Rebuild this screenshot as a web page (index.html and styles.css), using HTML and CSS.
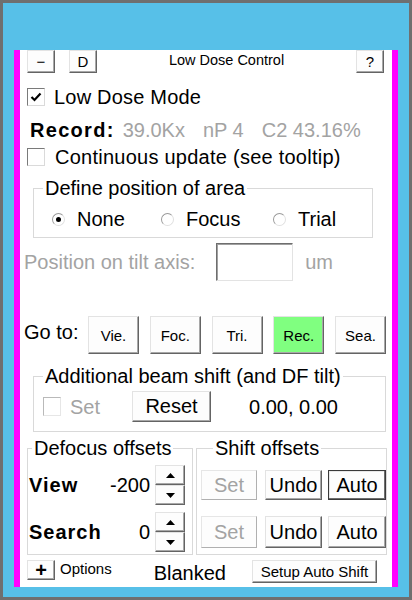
FILE: index.html
```html
<!DOCTYPE html>
<html>
<head>
<meta charset="utf-8">
<link rel="stylesheet" href="styles.css">
</head>
<body>
<div class="screen">
  <div class="panel">
    <div class="titlebar">
      <button class="btn small">&minus;</button>
      <button class="btn small">D</button>
      <div class="title">Low Dose Control</div>
      <button class="btn small">?</button>
    </div>

    <div class="row ldm">
      <span class="check on"><svg width="12" height="12" viewBox="0 0 12 12"><path d="M1.5 6 L4.5 9 L10.5 2.5" fill="none" stroke="#000" stroke-width="2.2"/></svg></span>
      <span class="lbl">Low Dose Mode</span>
    </div>

    <div class="row record">
      <b class="strong">Record:</b>
      <span class="dim v1">39.0Kx</span>
      <span class="dim v2">nP 4</span>
      <span class="dim v3">C2 43.16%</span>
    </div>

    <div class="row cont">
      <span class="check"></span>
      <span class="lbl">Continuous update (see tooltip)</span>
    </div>

    <fieldset class="group area">
      <legend>Define position of area</legend>
      <div class="radios">
        <div class="radio-item"><span class="radio on"></span><span>None</span></div>
        <div class="radio-item"><span class="radio"></span><span>Focus</span></div>
        <div class="radio-item"><span class="radio"></span><span>Trial</span></div>
      </div>
    </fieldset>

    <div class="row tilt">
      <span class="dim tilt-lbl">Position on tilt axis:</span>
      <span class="input"></span>
      <span class="dim um">um</span>
    </div>

    <div class="row goto">
      <span class="goto-lbl">Go to:</span>
      <div class="goto-btns">
        <button class="btn go">Vie.</button>
        <button class="btn go">Foc.</button>
        <button class="btn go">Tri.</button>
        <button class="btn go active">Rec.</button>
        <button class="btn go">Sea.</button>
      </div>
    </div>

    <fieldset class="group beam">
      <legend>Additional beam shift (and DF tilt)</legend>
      <div class="beam-row">
        <span class="check disabled"></span>
        <span class="dim set-lbl">Set</span>
        <button class="btn reset">Reset</button>
        <span class="beam-val">0.00, 0.00</span>
      </div>
    </fieldset>

    <div class="offsets">
      <fieldset class="group defocus">
        <legend>Defocus offsets</legend>
        <div class="df-row">
          <b class="strong df-name">View</b>
          <span class="df-val">-200</span>
          <div class="spin">
            <button class="btn spin-btn"><svg width="9" height="5" viewBox="0 0 9 5"><path d="M0 5 L4.5 0 L9 5 Z" fill="#000"/></svg></button>
            <button class="btn spin-btn"><svg width="9" height="5" viewBox="0 0 9 5"><path d="M0 0 L4.5 5 L9 0 Z" fill="#000"/></svg></button>
          </div>
        </div>
        <div class="df-row">
          <b class="strong df-name">Search</b>
          <span class="df-val">0</span>
          <div class="spin">
            <button class="btn spin-btn"><svg width="9" height="5" viewBox="0 0 9 5"><path d="M0 5 L4.5 0 L9 5 Z" fill="#000"/></svg></button>
            <button class="btn spin-btn"><svg width="9" height="5" viewBox="0 0 9 5"><path d="M0 0 L4.5 5 L9 0 Z" fill="#000"/></svg></button>
          </div>
        </div>
      </fieldset>
      <fieldset class="group shift">
        <legend>Shift offsets</legend>
        <div class="sh-row">
          <button class="btn sh set" disabled>Set</button>
          <button class="btn sh undo">Undo</button>
          <button class="btn sh auto default">Auto</button>
        </div>
        <div class="sh-row">
          <button class="btn sh set tall" disabled>Set</button>
          <button class="btn sh undo tall">Undo</button>
          <button class="btn sh auto tall">Auto</button>
        </div>
      </fieldset>
    </div>

    <div class="row footer">
      <button class="btn plus">+</button>
      <span class="options">Options</span>
      <span class="blanked">Blanked</span>
      <button class="btn setup">Setup Auto Shift</button>
    </div>
  </div>
</div>
</body>
</html>
```

FILE: styles.css
```css
* { box-sizing: border-box; }
html, body { margin: 0; padding: 0; }
body {
  width: 412px;
  height: 600px;
  font-family: "Liberation Sans", Arial, sans-serif;
  color: #000;
  background: #fff;
}
.screen {
  width: 412px;
  height: 600px;
  background: #57c0e8;
  border: 3px solid #6f6f6f;
  padding: 47px 11px 0 11px;
}
.panel {
  width: 384px;
  height: 537px;
  background: #fff;
  border-left: 6px solid #ff00ff;
  border-right: 6px solid #ff00ff;
  display: flex;
  flex-direction: column;
  font-size: 20px;
  line-height: 20px;
}
.btn {
  font-family: "Liberation Sans", Arial, sans-serif;
  background: #fdfdfd;
  border: 1px solid;
  border-color: #e3e3e3 #646464 #646464 #e3e3e3;
  box-shadow: inset -1px -1px 0 #a8a8a8;
  color: #000;
  padding: 0;
  margin: 0;
  display: flex;
  align-items: center;
  justify-content: center;
}
.dim { color: #a3a3a3; }
.strong { font-weight: bold; letter-spacing: 1px; }

.titlebar {
  height: 23px;
  display: flex;
  align-items: stretch;
  padding-left: 7px;
  padding-right: 8px;
}
.btn.small {
  width: 28px;
  height: 23px;
  font-size: 15px;
  font-weight: normal;
}
.titlebar .btn.small:nth-child(2) { margin-left: 14px; }
.title {
  flex: 1;
  text-align: center;
  font-size: 14.5px;
  line-height: 20px;
}

.row {
  display: flex;
  align-items: center;
  height: 20px;
}
.check {
  width: 18px;
  height: 18px;
  border: 1px solid;
  border-color: #7a7a7a #dadada #dadada #7a7a7a;
  background: #fff;
  display: inline-flex;
  align-items: center;
  justify-content: center;
  flex: none;
}
.check.disabled { border-color: #b9b9b9 #e6e6e6 #e6e6e6 #b9b9b9; }
.ldm { margin-top: 14px; padding-left: 7px; }
.ldm .lbl { margin-left: 9px; letter-spacing: 0.2px; }
.record { margin-top: 13px; padding-left: 10px; }
.record .strong { letter-spacing: 1.3px; }
.record .v1 { margin-left: 8px; }
.record .v2 { margin-left: 18px; }
.record .v3 { margin-left: 18px; }
.cont { margin-top: 7px; padding-left: 7px; }
.cont .lbl { margin-left: 10px; letter-spacing: 0.25px; }

.group {
  border: 1px solid #d9d9d9;
  padding: 0;
  min-width: 0;
}
.group legend {
  padding: 0 2px;
  height: 20px;
  line-height: 20px;
  font-size: 20px;
}
.area {
  margin: 11px 19px 0 13px;
  padding: 11px 0 8px 18px;
}
.area legend { margin-left: -9px; }
.radios {
  display: grid;
  grid-template-columns: 109px 112px auto;
  height: 20px;
}
.radio-item {
  display: flex;
  align-items: center;
}
.radio-item span:last-child { margin-left: 12px; }
.radio {
  width: 13px;
  height: 13px;
  border-radius: 50%;
  border: 1px solid;
  border-color: #9a9a9a #e0e0e0 #e0e0e0 #9a9a9a;
  background: #fff;
  display: inline-flex;
  align-items: center;
  justify-content: center;
  flex: none;
}
.radio.on::after {
  content: "";
  width: 5px;
  height: 5px;
  border-radius: 50%;
  background: #000;
}

.tilt {
  margin-top: 5px;
  height: 38px;
  padding-left: 4px;
}
.input {
  width: 77px;
  height: 38px;
  margin-left: 21px;
  border: 1px solid;
  border-color: #6e6e6e #e3e3e3 #e3e3e3 #6e6e6e;
  box-shadow: inset 1px 1px 0 #a0a0a0;
  background: #fff;
}
.um { margin-left: 12px; }

.goto {
  margin-top: 35px;
  height: 38px;
  align-items: flex-start;
  padding-left: 4px;
}
.goto-lbl { margin-top: 6px; width: 64px; }
.goto-btns {
  display: flex;
  gap: 10.75px;
}
.btn.go {
  width: 51px;
  height: 38px;
  font-size: 15px;
}
.btn.go.active { background: #80ff80; }

.beam {
  margin: 12px 6px 0 13px;
  padding: 5px 0 9px 9px;
}
.beam legend { margin-left: 0; }
.beam-row {
  display: flex;
  align-items: center;
  height: 31px;
}
.beam .check { width: 18px; height: 19px; }
.set-lbl { margin-left: 9px; }
.btn.reset {
  width: 79px;
  height: 31px;
  margin-left: 32px;
  font-size: 20px;
}
.beam-val { margin-left: 38px; }

.offsets {
  display: flex;
  margin: 6px 3px 0 5px;
}
.defocus {
  width: 166px;
  padding: 7px 7px 2px 1px;
}
.defocus legend { margin-left: 3px; }
.shift {
  flex: 1;
  padding: 7px 0 2px 4px;
  margin-left: 1px;
}
.shift legend { margin-left: 12px; }
.df-row {
  display: flex;
  align-items: center;
  height: 40px;
}
.df-row + .df-row { margin-top: 7px; }
.df-name { flex: 1; }
.df-val { margin-right: 5px; }
.spin {
  display: flex;
  flex-direction: column;
  width: 30px;
  height: 40px;
}
.spin-btn {
  width: 30px;
  height: 20px;
}
.sh-row {
  display: flex;
  align-items: center;
  height: 40px;
}
.sh-row + .sh-row { margin-top: 7px; }
.btn.sh {
  height: 30px;
  font-size: 20px;
}
.btn.sh.tall { height: 32px; }
.btn.set { width: 56px; color: #a3a3a3; border-color: #e6e6e6 #b0b0b0 #b0b0b0 #e6e6e6; box-shadow: none; }
.btn.undo { width: 57px; margin-left: 8px; }
.btn.auto { width: 58px; margin-left: 6px; }
.btn.auto.default {
  border: 1px solid #3a3a3a;
  box-shadow: inset -1px -1px 0 #6e6e6e, inset 1px 1px 0 #e8e8e8;
}

.footer {
  margin-top: 5px;
  height: 23px;
  padding-left: 7px;
  align-items: flex-start;
}
.btn.plus {
  width: 28px;
  height: 20px;
  font-size: 20px;
  font-weight: bold;
  line-height: 1;
}
.options {
  font-size: 15px;
  line-height: 15px;
  margin-left: 5px;
  margin-top: 1px;
}
.blanked {
  margin-left: 42px;
  margin-top: 3px;
}
.btn.setup {
  width: 125px;
  height: 23px;
  font-size: 15px;
  margin-left: 26px;
}
```
